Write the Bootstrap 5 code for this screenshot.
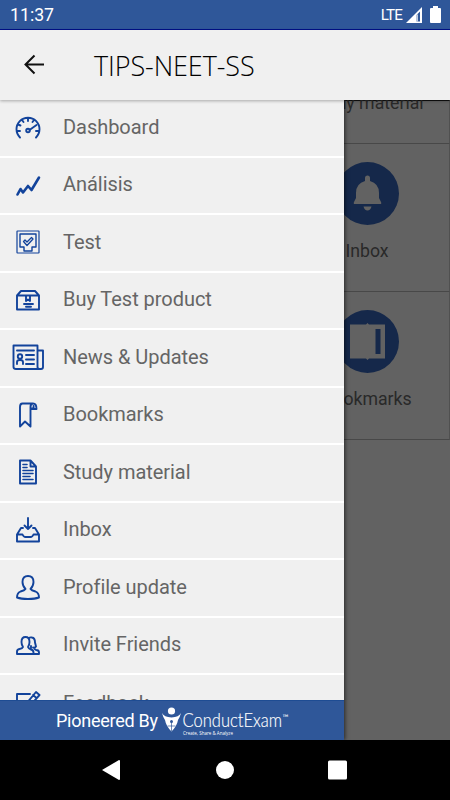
<!DOCTYPE html>
<html lang="en">
<head>
<meta charset="utf-8">
<meta name="viewport" content="width=device-width, initial-scale=1">
<title>TIPS-NEET-SS</title>
<link href="https://cdn.jsdelivr.net/npm/bootstrap@5.3.0/dist/css/bootstrap.min.css" rel="stylesheet">
<style>
body{font-family:Roboto,"Liberation Sans",sans-serif;background:#000}
.screen{width:450px;height:800px}
.statusbar{height:30px;background:#2f5799;border-bottom:1px solid #00108a;padding:1px 9px 0 10px;font-size:17.7px;color:#fff}
.lte{font-size:15.2px;letter-spacing:-.9px}
.battery{margin-left:8px}
.appbar{height:70px;background:#f0f0f0;padding:0 22px;gap:48px;z-index:2;box-shadow:0 1px 3px rgba(0,0,0,.3)}
.apptitle{font-family:"Open Sans","Noto Sans",sans-serif;font-weight:300;font-size:27px;color:#000;line-height:1;letter-spacing:-.1px}
.stage{height:640px;background:#626262}
.drawer{width:344px;background:#f0f0f0;z-index:1;box-shadow:1px 0 4px rgba(0,0,0,.6)}
.menu{height:600px}
.menu .list-group-item{height:57.5px;padding:0 0 1.6px 12px;background:#f0f0f0;border:0;border-bottom:2px solid #fff;color:#656565;font-size:20px;gap:19px;letter-spacing:-.04px}
.menu .list-group-item svg{width:32px;height:32px;margin-top:1px;fill:none;stroke:#12439b;stroke-width:1.9;stroke-linejoin:round;stroke-linecap:round}
.pioneer{height:40px;background:#2f5799;border-top:1px solid #1e4c93;color:#fff;font-size:18px;padding-left:56px;letter-spacing:-.26px}
.pioneer svg{margin-left:3px;letter-spacing:0}
.backdrop-pane{width:106px;color:#292929;font-size:17.7px}
.tile{width:165px;height:148px;margin-left:-59px;border-right:1px solid #505050;border-bottom:1px solid #484848;padding-top:18px;line-height:22px}
.tile.cut{height:44px;padding-top:0;border-top:1px solid #111}
.tile.cut span{margin-top:-9px}
.tile svg{width:63px;height:63px;margin-bottom:15px}
.navkeys{height:60px;background:#000}
</style>
<script src="https://cdn.jsdelivr.net/npm/bootstrap@5.3.0/dist/js/bootstrap.bundle.min.js"></script>
</head>
<body>
<div class="screen d-flex flex-column overflow-hidden">
  <div class="statusbar d-flex align-items-center justify-content-between flex-shrink-0">
    <span>11:37</span>
    <div class="d-flex align-items-center">
      <span class="lte">LTE</span>
      <svg class="ms-1" width="16" height="16" viewBox="0 0 16 16"><path d="M0 16L16 0V16Z" fill="#fff"/><path d="M10.500 8V14.500H14V4.500Z" fill="#2f5799"/><path d="M11.200 7.500V14.500" stroke="#fff" stroke-width="1"/></svg>
      <svg class="battery" width="11" height="17" viewBox="0 0 11 17"><path d="M3 0h5v2h2a1 1 0 0 1 1 1v13a1 1 0 0 1-1 1H1a1 1 0 0 1-1-1V3a1 1 0 0 1 1-1h2z" fill="#fff"/></svg>
    </div>
  </div>
  <header class="appbar d-flex align-items-center position-relative flex-shrink-0">
    <svg width="24" height="24" viewBox="0 0 24 24" fill="none" stroke="#111" stroke-width="2"><path d="M22 11.500H3.500M12.500 2.500l-9 9 9 9"/></svg>
    <h1 class="apptitle m-0">TIPS-NEET-SS</h1>
  </header>
  <main class="stage d-flex flex-shrink-0">
    <nav class="drawer flex-shrink-0 position-relative">
      <div class="menu list-group list-group-flush overflow-hidden rounded-0">
        <a class="list-group-item d-flex align-items-center flex-shrink-0"><svg viewBox="0 0 32 32"><path d="M8 26.500A11.500 11.500 0 1 1 24 26.500M16 7v3M10 9l1.500 2M22 9l-1.500 2M6 13.500l2.500 1M5 20h3M27 20h-3M24.500 14l-7 5"/><circle cx="16" cy="19.500" r="1.800"/></svg>Dashboard</a>
        <a class="list-group-item d-flex align-items-center flex-shrink-0"><svg viewBox="0 0 32 32"><path stroke-width="2.600" d="M5.500 25.500l3-5.500 2.500 3.500 5-6.500 3.500 4L27 8.500"/></svg>Análisis</a>
        <a class="list-group-item d-flex align-items-center flex-shrink-0"><svg viewBox="0 0 32 32"><rect x="5" y="5" width="22" height="22" rx=".5" stroke-width="1.200"/><path stroke-width="1.400" d="M8 8h16v13h-4v4h-8v-4H8z"/><path stroke-width="1.300" d="M11.500 15.500l1.500-1.500 2 2 4.500-4.500 1.500 1.500-6 6.500z"/></svg>Test</a>
        <a class="list-group-item d-flex align-items-center flex-shrink-0"><svg viewBox="0 0 32 32"><path d="M5 11.500L9 7h14l4 4.500v14H5zM5 11.500h22M14 12v5l2-1.500 2 1.500v-5M12 20h9M14 22.800h5"/></svg>Buy Test product</a>
        <a class="list-group-item d-flex align-items-center flex-shrink-0"><svg viewBox="0 0 32 32"><path d="M1.500 4.500h24V26q0 2 2 2H4q-2.500 0-2.500-2zM25.500 9.500H31V26q0 2-2 2h-1.500M5 9.500h17M14 14h8M14 18.500h8M14 23h8M5 23v-2q0-2 3-2t3 2v2"/><circle cx="8" cy="15.500" r="2.200"/></svg>News &amp; Updates</a>
        <a class="list-group-item d-flex align-items-center flex-shrink-0"><svg viewBox="0 0 32 32"><path d="M21 4.500H10.500Q8 4.500 8 8V27.500l5-5 5.500 5V8q0-3.500 2.500-3.500 3.500 0 3.500 5.500h-6M19 9.500q3.500 0 2.500-2.500"/></svg>Bookmarks</a>
        <a class="list-group-item d-flex align-items-center flex-shrink-0"><svg viewBox="0 0 32 32"><path d="M8 4.500h10.500l5.500 6v17H8zM18.500 4.500v6H24"/><path stroke-width="1.600" d="M11 8.500h4M11 11.500h4M11 14.500h10M11 17.500h10M11 20.500h7M11 23.500h10"/></svg>Study material</a>
        <a class="list-group-item d-flex align-items-center flex-shrink-0"><svg viewBox="0 0 32 32"><path d="M16 4v11M12.500 11.500L16 15l3.500-3.500M11 14H9l-4 6.500v7h22v-7L23 14h-2M5 20.500h5.500q1 2.500 3 2.500h5q2 0 3-2.500H27"/></svg>Inbox</a>
        <a class="list-group-item d-flex align-items-center flex-shrink-0"><svg viewBox="0 0 32 32"><path d="M13.500 18q-3-3-3-7 0-6 5.500-6t5.500 6q0 4-3 7 1 1.500 5 2.500 3.500 1.500 3.500 6-4 1.500-11 1.500T5 26.500q0-4.500 3.500-6 4-1 5-2.500z"/></svg>Profile update</a>
        <a class="list-group-item d-flex align-items-center flex-shrink-0"><svg viewBox="0 0 32 32"><path d="M11 18q-1.500-2-1.500-5 0-5 4-5t4 5q0 3-1.500 5 .5 1.500 3 2.500 2.500.5 2.500 3v1.500H5V22.500q0-2 2.500-2.500 3-.5 3.500-2zM17 9q1-1 3-.5 3 .5 3 5l1 4q-1 1.500-3 1M23 18.500q-1.500 1 1 2.500 3 0 3 2.500V25h-6M19 17v2"/></svg>Invite Friends</a>
        <a class="list-group-item d-flex align-items-center flex-shrink-0"><svg viewBox="0 0 32 32"><path d="M18 7H5v20h19V16M14 17l-1 4 4-1L27.500 8 24 5z M21 8l3.500 3"/></svg>Feedback</a>
      </div>
      <div class="pioneer d-flex align-items-center">
        <span>Pioneered By</span>
        <svg width="130" height="38" viewBox="0 0 130 38" fill="#fff">
          <circle cx="10.500" cy="9" r="3.600"/>
          <path d="M1 11q2 4 9.500 4.500Q18 15 20 11q-1 4-3 7-1 6-6.500 11.500Q5 24 4 18 2 15 1 11z"/>
          <path d="M10.500 20v9M6.500 24h8" stroke="#2f5799" stroke-width=".7"/><circle cx="10.500" cy="19.500" r="1.500" fill="#2f5799"/>
          <text x="21.500" y="24.500" font-family="Lato, sans-serif" font-weight="300" font-size="19" stroke="#fff" stroke-width=".15" textLength="99.500" lengthAdjust="spacingAndGlyphs">ConductExam</text>
          <text x="121.500" y="18.500" font-family="Lato, sans-serif" font-size="9" textLength="6" lengthAdjust="spacingAndGlyphs">™</text>
          <text x="22" y="32.500" font-family="Open Sans, sans-serif" font-size="5" textLength="50" lengthAdjust="spacingAndGlyphs">Create, Share &amp; Analyze</text>
        </svg>
      </div>
    </nav>
    <section class="backdrop-pane overflow-hidden">
      <div class="tile cut d-flex flex-column align-items-center"><span>Study material</span></div>
      <div class="tile d-flex flex-column align-items-center">
        <svg viewBox="0 0 63 63"><circle cx="31.500" cy="31.500" r="31.500" fill="#15284a"/><path fill="#626262" d="M29 19v-3a2.500 2.500 0 0 1 5 0v3q9 2.500 9 12v5l2 4q1 2-1 2H19q-2 0-1-2l2-4v-5q0-9.500 9-12zM27.500 44.500h8q-1 4-4 4t-4-4z"/></svg>
        <span>Inbox</span>
      </div>
      <div class="tile d-flex flex-column align-items-center">
        <svg viewBox="0 0 63 63"><circle cx="31.500" cy="31.500" r="31.500" fill="#15284a"/><path fill="#626262" d="M14 14.500h16l1.500-1.500 1.500 1.500h16v34H33L31.500 50 30 48.500H14z"/><path fill="#15284a" d="M39.500 19h5v25h-5z"/></svg>
        <span>Bookmarks</span>
      </div>
    </section>
  </main>
  <footer class="navkeys d-flex align-items-center flex-shrink-0">
    <svg width="450" height="60" viewBox="0 0 450 60" fill="#fff"><path d="M102 30l17-10q1 0 1 1v18q0 1-1 1z"/><circle cx="225" cy="30" r="9"/><rect x="328" y="20.500" width="19" height="19" rx="1.500"/></svg>
  </footer>
</div>
</body>
</html>
